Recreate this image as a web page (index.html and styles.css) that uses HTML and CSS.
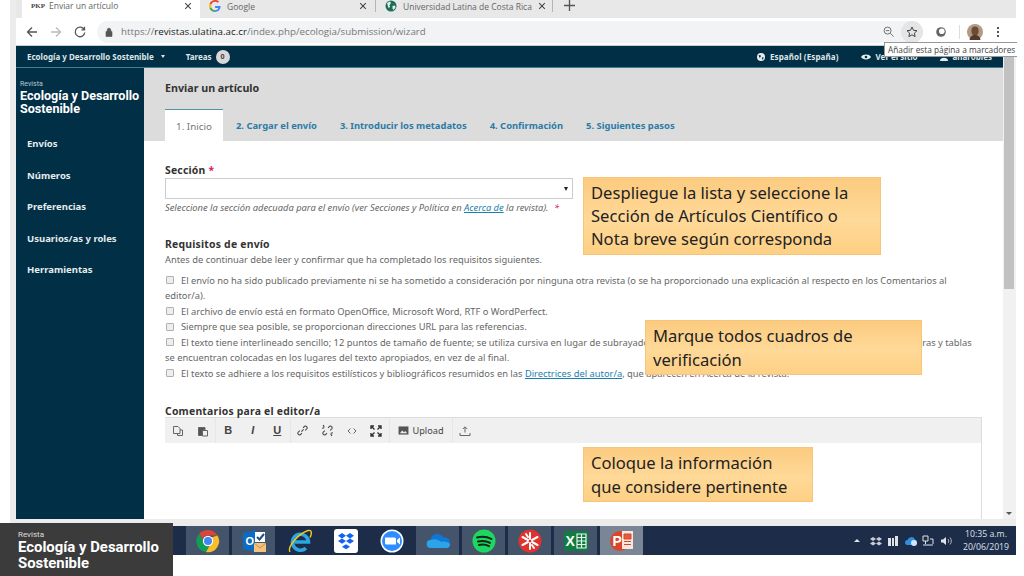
FILE: index.html
```html
<!DOCTYPE html>
<html lang="es">
<head>
    <meta charset="UTF-8">
    <title>Enviar un artículo</title>
    <link rel="stylesheet" href="styles.css">
</head>
<body>
<div class="slide">

    <div class="window">
        <div class="tabs">
            <div class="tab tab-active">
                <span class="pkp">PKP</span>
                <span class="tab-title">Enviar un artículo</span>
                <svg class="tab-close" viewBox="0 0 10 10"><path d="M1.500 1.500l7 7M8.500 1.500l-7 7"/></svg>
            </div>
            <div class="tab tab-second">
                <svg class="favicon" viewBox="0 0 12 12">
                    <path d="M11.600 6.100H6.100v2h3.200C9 9.500 7.700 10.200 6.100 10.200V12c2.100 0 5.500-1.400 5.500-5.900z" fill="#4285f4"/>
                    <path d="M2.300 7.200L.6 8.500C1.600 10.600 3.700 12 6.100 12v-1.800c-1.800 0-3.300-1.200-3.800-3z" fill="#34a853"/>
                    <path d="M2.300 4.800L.6 3.500C.2 4.300 0 5.100 0 6s.2 1.700.6 2.500l1.700-1.300C2.100 6.200 2.100 5.800 2.300 4.800z" fill="#fbbc05"/>
                    <path d="M6.100 0C3.700 0 1.600 1.400.6 3.500l1.700 1.300c.5-1.800 2-3 3.800-3 1 0 1.800.3 2.500 1l1.500-1.500C9.100.6 7.700 0 6.100 0z" fill="#ea4335"/>
                </svg>
                <span class="tab-title">Google</span>
                <svg class="tab-close" viewBox="0 0 10 10"><path d="M1.500 1.500l7 7M8.500 1.500l-7 7"/></svg>
            </div>
            <div class="tab tab-third">
                <svg class="favicon" viewBox="0 0 12 12">
                    <circle cx="6" cy="6" r="5.500" fill="#1d6f5c"/>
                    <path d="M2 3l3-1.500 1 1.500-1.500 2L5 7 3.500 8zM7.500 6l2.500-.5.5 2-2 2.500-1-1.500z" fill="#e9efe6"/>
                </svg>
                <span class="tab-title">Universidad Latina de Costa Rica</span>
                <svg class="tab-close" viewBox="0 0 10 10"><path d="M1.500 1.500l7 7M8.500 1.500l-7 7"/></svg>
            </div>
            <svg class="tab-new" viewBox="0 0 10 10"><path d="M5 0v10M0 5h10"/></svg>
        </div>

        <div class="toolbar">
            <svg class="nav-icon" viewBox="0 0 12 12"><path d="M11 6H1.500M6 1.500L1.500 6 6 10.500"/></svg>
            <svg class="nav-icon nav-off" viewBox="0 0 12 12"><path d="M1 6h9.500M6 1.500L10.500 6 6 10.500"/></svg>
            <svg class="nav-icon" viewBox="0 0 12 12"><path d="M10.200 3.500A4.800 4.800 0 1 0 10.800 6.500M10.500 .8v3h-3"/></svg>
            <div class="address">
                <svg class="lock" viewBox="0 0 8 10"><path d="M1 4.500h6V9.500H1zM2.200 4.500V3a1.800 1.800 0 0 1 3.600 0v1.500"/></svg>
                <span class="url">https://<b>revistas.ulatina.ac.cr</b>/index.php/ecologia/submission/wizard</span>
                <svg class="zoom-glass" viewBox="0 0 12 12"><circle cx="5" cy="5" r="3.800"/><path d="M8 8l3.500 3.500M3.200 5h3.600"/></svg>
                <span class="star-button">
                    <svg viewBox="0 0 12 12"><path d="M6 1l1.500 3.300 3.500.4-2.600 2.400.7 3.500L6 8.800l-3.100 1.800.7-3.500L1 4.700l3.500-.4z"/></svg>
                </span>
            </div>
            <svg class="extension" viewBox="0 0 12 12"><circle cx="6" cy="6" r="4.800"/><circle cx="6.800" cy="5.200" r="2.800" fill="#fff"/></svg>
            <span class="tool-sep"></span>
            <svg class="avatar" viewBox="0 0 16 16">
                <circle cx="8" cy="8" r="8" fill="#b19a83"/>
                <ellipse cx="8" cy="7" rx="3.600" ry="4.400" fill="#6b4a36"/>
                <path d="M2.500 16c.5-4 3-5 5.500-5s5 1 5.500 5z" fill="#54392b"/>
            </svg>
            <span class="menu-dots"><i></i><i></i><i></i></span>
        </div>

        <div class="browser-page">
            <div class="page">
                <header class="topnav">
                    <span class="topnav-link">Ecología y Desarrollo Sostenible</span>
                    <span class="caret"></span>
                    <span class="topnav-link tasks">Tareas</span>
                    <span class="badge">0</span>
                    <div class="topnav-right">
                        <svg class="top-icon" viewBox="0 0 10 10"><circle cx="5" cy="5" r="5"/><path d="M2 2.500l3 .5-.5 2L3 6zM6 6l2-1v2L6.500 8.500z" fill="#012f45"/></svg>
                        <span class="topnav-link lang">Español (España)</span>
                        <svg class="top-icon eye" viewBox="0 0 12 8"><path d="M0 4c2-4 10-4 12 0-2 4-10 4-12 0z"/><circle cx="6" cy="4" r="1.600" fill="#012f45"/></svg>
                        <span class="topnav-link site">Ver el sitio</span>
                        <svg class="top-icon user" viewBox="0 0 10 10"><circle cx="5" cy="2.500" r="2.500"/><path d="M0 10c0-3 2-4 5-4s5 1 5 4z"/></svg>
                        <span class="topnav-link">anarobles</span>
                    </div>
                </header>

                <div class="page-body">
                    <nav class="sidebar">
                        <div class="brand">
                            <small>Revista</small>
                            <strong>Ecología y Desarrollo Sostenible</strong>
                        </div>
                        <ul class="side-menu">
                            <li>Envíos</li>
                            <li>Números</li>
                            <li>Preferencias</li>
                            <li>Usuarios/as y roles</li>
                            <li>Herramientas</li>
                        </ul>
                    </nav>

                    <main class="main">
                        <div class="main-head">
                            <h1>Enviar un artículo</h1>
                            <ul class="steps">
                                <li class="step-active">1. Inicio</li>
                                <li>2. Cargar el envío</li>
                                <li>3. Introducir los metadatos</li>
                                <li>4. Confirmación</li>
                                <li>5. Siguientes pasos</li>
                            </ul>
                        </div>

                        <div class="form">
                            <label class="field-label">Sección <span class="req">*</span></label>
                            <div class="select"><span class="select-arrow"></span></div>
                            <p class="hint">Seleccione la sección adecuada para el envío (ver Secciones y Política en <a>Acerca de</a> la revista). <span class="req">*</span></p>

                            <h2>Requisitos de envío</h2>
                            <p class="intro">Antes de continuar debe leer y confirmar que ha completado los requisitos siguientes.</p>
                            <ul class="checks">
                                <li><span class="box"></span>El envío no ha sido publicado previamente ni se ha sometido a consideración por ninguna otra revista (o se ha proporcionado una explicación al respecto en los Comentarios al editor/a).</li>
                                <li><span class="box"></span>El archivo de envío está en formato OpenOffice, Microsoft Word, RTF o WordPerfect.</li>
                                <li><span class="box"></span>Siempre que sea posible, se proporcionan direcciones URL para las referencias.</li>
                                <li><span class="box"></span>El texto tiene interlineado sencillo; 12 puntos de tamaño de fuente; se utiliza cursiva en lugar de subrayado (excepto en las direcciones URL); y todas las ilustraciones, figuras y tablas se encuentran colocadas en los lugares del texto apropiados, en vez de al final.</li>
                                <li><span class="box"></span>El texto se adhiere a los requisitos estilísticos y bibliográficos resumidos en las <a>Directrices del autor/a</a>, que aparecen en Acerca de la revista.</li>
                            </ul>

                            <h2 class="editor-label">Comentarios para el editor/a</h2>
                            <div class="editor">
                                <div class="editor-tools">
                                    <span class="tool"><svg viewBox="0 0 12 12"><path d="M1.500 1.500h4.500l2 2v5H1.500zM8 5h2.500v5.500h-5V8.500"/></svg></span>
                                    <span class="tool"><svg viewBox="0 0 12 12"><path class="solid" d="M1.500 2.500h6.500v2.500H5.500v5.500h-4z"/><path d="M5.500 5.500h5v5.500h-5z"/></svg></span>
                                    <span class="tool-gap"></span>
                                    <span class="tool tool-text bold">B</span>
                                    <span class="tool tool-text italic">I</span>
                                    <span class="tool tool-text under">U</span>
                                    <span class="tool-gap"></span>
                                    <span class="tool"><svg class="chain" viewBox="0 0 12 12"><path d="M5 7l2-2M6.500 3.500l1.500-1.500a1.700 1.700 0 0 1 2.200 2.200L8.500 5.800M5.500 8.500L4 10a1.700 1.700 0 0 1-2.200-2.200l1.700-1.600"/></svg></span>
                                    <span class="tool"><svg class="chain" viewBox="0 0 12 12"><path d="M6.500 3.500l1.500-1.500a1.700 1.700 0 0 1 2.200 2.200L8.500 5.800M5.500 8.500L4 10a1.700 1.700 0 0 1-2.200-2.200l1.700-1.600M2 1l1 2M1 4l2-.5M10 11l-1-2M11 8l-2 .5"/></svg></span>
                                    <span class="tool"><svg viewBox="0 0 12 12"><path d="M4.500 3.500L2 6l2.500 2.500M7.500 3.500L10 6 7.500 8.500"/></svg></span>
                                    <span class="tool"><svg class="heavy" viewBox="0 0 12 12"><path d="M1 4V1h3M8 1h3v3M11 8v3H8M4 11H1V8M1.500 1.500l3 3M10.500 1.500l-3 3M10.500 10.500l-3-3M1.500 10.500l3-3"/></svg></span>
                                    <span class="tool-gap"></span>
                                    <span class="upload">
                                        <svg viewBox="0 0 12 10"><path class="solid" d="M.5 .5h11v9H.5z"/><path class="hole" d="M2 8l2.500-3 2 2 1.500-1.500L10 8z"/></svg>
                                        Upload
                                    </span>
                                    <span class="tool-gap"></span>
                                    <span class="tool"><svg viewBox="0 0 12 12"><path d="M6 7.500V2M3.800 4L6 1.800 8.200 4M1 8v2.500h10V8"/></svg></span>
                                </div>
                            </div>
                        </div>
                    </main>
                </div>
            </div>

            <div class="scrollbar">
                <div class="scroll-thumb"></div>
                <span class="scroll-arrow"></span>
            </div>
        </div>
    </div>

    <div class="taskbar">
        <span class="task-btn task-open">
            <svg viewBox="0 0 24 24">
                <path d="M12 1a11 11 0 0 1 9.500 5.500H12a5.500 5.500 0 0 0-5.200 3.700L3.200 4.700A11 11 0 0 1 12 1z" fill="#db4437"/>
                <path d="M3.200 4.700l4.700 8.100a5.500 5.500 0 0 0 5.500 4.600L10 23A11 11 0 0 1 3.200 4.700z" fill="#0f9d58"/>
                <path d="M21.500 6.500A11 11 0 0 1 10 23l4.800-8.200a5.500 5.500 0 0 0 .3-6.300z" fill="#f7bd2a"/>
                <circle cx="12" cy="12" r="5.200" fill="#fff"/>
                <circle cx="12" cy="12" r="4" fill="#4285f4"/>
            </svg>
        </span>
        <span class="task-btn task-open">
            <svg viewBox="0 0 24 24">
                <path d="M1 4l13-3v22L1 20z" fill="#0a6cc2"/>
                <rect x="13" y="3" width="10" height="10" fill="#fff"/>
                <path d="M15 8l2.500 2.500L22 5" fill="none" stroke="#1b4f8a" stroke-width="2"/>
                <rect x="12" y="14" width="12" height="9" fill="#f3c27d"/>
                <path d="M12 14l6 5 6-5" fill="none" stroke="#c98f47"/>
                <text x="3.500" y="15.500" class="app-letter" font-size="11">O</text>
            </svg>
        </span>
        <span class="task-btn">
            <svg viewBox="0 0 24 24">
                <path d="M6.500 13h14a8 8 0 1 0-2.600 6.200" fill="none" stroke="#2aa7e0" stroke-width="3.600"/>
                <path d="M2 23C-1 18 10 5 20 1.500c4-1 4 3 2 7" fill="none" stroke="#f2c81f" stroke-width="1.400"/>
            </svg>
        </span>
        <span class="task-btn">
            <svg viewBox="0 0 24 24">
                <rect width="24" height="24" rx="3" fill="#fff"/>
                <path d="M8 4l4 2.700-4 2.700-4-2.700zM16 4l4 2.700-4 2.700-4-2.700zM8 9.400l4 2.700-4 2.700-4-2.700zM16 9.400l4 2.700-4 2.700-4-2.700zM12 15.300l4 2.500-4 2.500-4-2.500z" fill="#0f62f3"/>
            </svg>
        </span>
        <span class="task-btn">
            <svg viewBox="0 0 24 24">
                <circle cx="12" cy="12" r="11.500" fill="#fff"/>
                <circle cx="12" cy="12" r="10" fill="#2d8cff"/>
                <path d="M5 8.500h9.500a1.500 1.500 0 0 1 1.500 1.500v5.500H6.500A1.500 1.500 0 0 1 5 14zM17 11l3-2.500v7L17 13z" fill="#fff"/>
            </svg>
        </span>
        <span class="task-btn task-open">
            <svg viewBox="0 0 24 24">
                <path d="M5 19a4 4 0 0 1-.5-8 7 7 0 0 1 13-2.500A5.500 5.500 0 0 1 24 15a4 4 0 0 1-3 4z" fill="#0f78d4"/>
                <path d="M5 19a4 4 0 0 1-.5-8c4-2 9 0 11 2 3-1 7 0 8.500 2a4 4 0 0 1-3 4z" fill="#2da3ea"/>
            </svg>
        </span>
        <span class="task-btn task-open">
            <svg viewBox="0 0 24 24">
                <circle cx="12" cy="12" r="11.500" fill="#1ed760"/>
                <path d="M5 8.500c5-1.500 10-1 14.500 1.500M6 12.500c4-1 8.500-.6 12 1.300M7 16c3.500-.8 7-.4 10 1.100" fill="none" stroke="#10261a" stroke-width="2" stroke-linecap="round"/>
            </svg>
        </span>
        <span class="task-btn task-open">
            <svg viewBox="0 0 24 24">
                <circle cx="12" cy="12" r="11.500" fill="#e1332d"/>
                <path d="M12 4v6M12 14v6M4.500 8l5.500 3M14 13l5.500 3M4.500 16l5.500-3M14 11l5.500-3M8 5l2 3M16 19l-2-3" fill="none" stroke="#fff" stroke-width="2" stroke-linecap="round"/>
            </svg>
        </span>
        <span class="task-btn task-open">
            <svg viewBox="0 0 24 24">
                <rect x="0" y="2" width="24" height="20" rx="2" fill="#107c41"/>
                <path d="M13 5h9v14h-9zM13 8.500h9M13 12h9M13 15.500h9M17.500 5v14" fill="none" stroke="#e8f5ec" stroke-width="1.200"/>
                <text x="1.500" y="17" class="app-letter" font-size="14">X</text>
            </svg>
        </span>
        <span class="task-btn task-active">
            <svg viewBox="0 0 24 24">
                <circle cx="10" cy="12" r="10" fill="#d8472b"/>
                <rect x="12" y="2" width="11" height="18" fill="#f8e6df"/>
                <path d="M14 5h7v5h-7zM14 12.500h7M14 15.500h7" fill="#e0603f" stroke="#d8472b"/>
                <text x="2.500" y="17" class="app-letter" font-size="14">P</text>
            </svg>
        </span>

        <div class="tray">
            <span class="tray-caret"></span>
            <svg viewBox="0 0 12 12"><path d="M3 1.500l3 2-3 2-3-2zM9 1.500l3 2-3 2-3-2zM3 6l3 2-3 2-3-2zM9 6l3 2-3 2-3-2z" transform="translate(0 .5)" fill="#c9ced6"/></svg>
            <svg viewBox="0 0 12 12"><path d="M1 3h3v8H1zM5 3h2v8H5zM8 1h3v10H8z" fill="#dfe3e8"/></svg>
            <svg viewBox="0 0 12 12"><path d="M2.500 10a2.500 2.500 0 0 1 0-5 4 4 0 0 1 7.500-.5A3 3 0 0 1 10 10z" fill="#2f8fe0"/><circle cx="9" cy="8" r="3" fill="#cfe6fa"/></svg>
            <svg viewBox="0 0 12 12"><path d="M1 1h5v5H1zM3.500 6v3M1 10h10M8 4h3v5" fill="none" stroke="#dfe3e8"/></svg>
            <svg viewBox="0 0 12 12"><path d="M1 4.500h2L6 2v8L3 7.500H1z" fill="#dfe3e8"/><path d="M8 4c1 1 1 3 0 4M10 2.500c1.800 2 1.800 5 0 7" fill="none" stroke="#aab2bd"/></svg>
            <div class="clock">10:35 a.m.<br>20/06/2019</div>
        </div>
    </div>

    <div class="tooltip">Añadir esta página a marcadores</div>

    <div class="callout callout-section">Despliegue la lista y seleccione la Sección de Artículos Científico o Nota breve según corresponda</div>
    <div class="callout callout-checks">Marque todos cuadros de verificación</div>
    <div class="callout callout-editor">Coloque la información que considere pertinente</div>

    <div class="journal-label">
        <small>Revista</small>
        <strong>Ecología y Desarrollo Sostenible</strong>
    </div>
</div>
</body>
</html>
```

FILE: styles.css
```css
* {
    box-sizing: border-box;
}

body {
    margin: 0;
    background: #fff;
    font-family: "Noto Sans", sans-serif;
}

.slide {
    position: relative;
    width: 1024px;
    height: 576px;
    overflow: hidden;
    background: #fff;
}

/* browser window */
.window {
    width: 1006px;
    height: 526px;
    margin-left: 10px;
    padding-left: 6px;
    background: #ececec;
}

.tabs {
    display: flex;
    align-items: flex-start;
    height: 18px;
    padding-left: 6px;
    background: #e8e8e8;
    font-family: "Open Sans", sans-serif;
    font-size: 8.5px;
    color: #666;
}

.tab {
    display: flex;
    align-items: center;
    gap: 6px;
    height: 12px;
    padding: 0 8px 0 9px;
    border-right: 1px solid #b5b5b5;
}

.tab-active {
    width: 178px;
    height: 18px;
    padding-bottom: 7px;
    background: #fff;
    border-right: 0;
}

.tab-second { width: 176px; }
.tab-third { width: 177px; padding-right: 6px; }

.pkp {
    font-family: "Liberation Serif", serif;
    font-size: 7px;
    font-weight: bold;
    color: #444;
    width: 12px;
}

.favicon {
    width: 12px;
    height: 12px;
    flex: none;
}

.tab-title {
    flex: 1;
    white-space: nowrap;
}

.tab-close {
    width: 8px;
    height: 8px;
    flex: none;
    fill: none;
    stroke: #444;
    stroke-width: 1.3;
}

.tab-new {
    width: 11px;
    height: 11px;
    margin-left: 11px;
    fill: none;
    stroke: #555;
    stroke-width: 1.2;
}

.toolbar {
    display: flex;
    align-items: center;
    height: 28px;
    padding-left: 10px;
    background: #fff;
    border-bottom: 1px solid #ccc;
}

.nav-icon {
    width: 12px;
    height: 12px;
    margin-right: 12px;
    fill: none;
    stroke: #555;
    stroke-width: 1.3;
}

.nav-off {
    stroke: #bbb;
}

.address {
    display: flex;
    align-items: center;
    width: 826px;
    height: 22px;
    margin-left: -1px;
    padding-left: 8px;
    border-radius: 11px;
    background: #f1f3f4;
}

.lock {
    width: 8px;
    height: 10px;
    fill: #555;
    stroke: #555;
    stroke-width: .6;
}

.url {
    flex: 1;
    margin-left: 8px;
    font-family: "Open Sans", sans-serif;
    font-size: 9.75px;
    color: #777;
    white-space: nowrap;
}

.url b {
    font-weight: normal;
    color: #222;
}

.zoom-glass {
    width: 11px;
    height: 11px;
    margin-right: 7px;
    fill: none;
    stroke: #666;
}

.star-button {
    display: flex;
    align-items: center;
    justify-content: center;
    width: 22px;
    height: 22px;
    border-radius: 50%;
    background: #e3e5e7;
}

.star-button svg {
    width: 12px;
    height: 12px;
    fill: none;
    stroke: #444;
}

.extension {
    width: 12px;
    height: 12px;
    margin-left: 12px;
    fill: #666;
}

.tool-sep {
    width: 1px;
    height: 14px;
    margin-left: 12px;
    background: #ddd;
}

.avatar {
    width: 16px;
    height: 16px;
    margin-left: 7px;
}

.menu-dots {
    display: flex;
    flex-direction: column;
    gap: 2px;
    margin-left: 14px;
}

.menu-dots i {
    width: 2px;
    height: 2px;
    background: #555;
}

.browser-page {
    display: flex;
    height: 473px;
}

.page {
    display: flex;
    flex-direction: column;
    width: 987px;
    background: #fff;
}

/* top navigation */
.topnav {
    display: flex;
    align-items: center;
    flex: none;
    height: 22px;
    padding: 0 11px;
    background: #012f45;
    border-bottom: 1px solid #3c7f98;
    color: #dfe7ea;
    font-size: 8px;
    font-weight: bold;
}

.topnav-link {
    white-space: nowrap;
}

.caret {
    width: 0;
    height: 0;
    margin-left: 7px;
    border-left: 2.5px solid transparent;
    border-right: 2.5px solid transparent;
    border-top: 3px solid #dfe7ea;
}

.tasks {
    margin-left: 21px;
}

.badge {
    display: flex;
    align-items: center;
    justify-content: center;
    width: 14px;
    height: 14px;
    margin-left: 4px;
    border-radius: 50%;
    background: #d8d8d8;
    color: #444;
    font-size: 7px;
}

.topnav-right {
    display: flex;
    align-items: center;
    margin-left: auto;
}

.top-icon {
    width: 8px;
    height: 8px;
    fill: #e6ecee;
}

.lang {
    margin-left: 5px;
    letter-spacing: .12px;
}

.eye {
    width: 10px;
    margin-left: 22px;
}

.site {
    margin-left: 5px;
}

.user {
    margin: 0 5px 0 22px;
}

.page-body {
    display: flex;
    flex: 1;
    min-height: 0;
}

/* sidebar */
.sidebar {
    flex: none;
    width: 128px;
    padding-top: 12px;
    background: #012f45;
    color: #e6ecee;
}

.brand {
    padding-left: 4px;
}

.brand small {
    display: block;
    font-family: Roboto, sans-serif;
    font-size: 7px;
    line-height: 9px;
    color: #b9c7ce;
}

.brand strong {
    display: block;
    font-family: Roboto, sans-serif;
    font-size: 12.6px;
    line-height: 13px;
    color: #fff;
}

.side-menu {
    list-style: none;
    margin: 22px 0 0;
    padding: 0 0 0 11px;
    font-size: 9.5px;
    font-weight: bold;
}

.side-menu li {
    height: 31.6px;
    line-height: 13px;
}

/* main column */
.main {
    flex: 1;
    min-width: 0;
    overflow: hidden;
}

.main-head {
    height: 73px;
    padding: 13px 0 0 21px;
    background: #dcdcdc;
}

.main-head h1 {
    margin: 0;
    font-size: 10.7px;
    line-height: 14px;
    color: #333;
}

.steps {
    display: flex;
    gap: 23px;
    list-style: none;
    margin: 14px 0 0;
    padding: 0;
    font-size: 9.4px;
    font-weight: bold;
    color: #2b7ba6;
}

.steps li {
    height: 32px;
    line-height: 33px;
    white-space: nowrap;
}

.steps .step-active {
    width: 58px;
    margin-right: -10px;
    text-align: center;
    background: #fff;
    border-top: 1px solid #4f93ad;
    color: #777;
    font-size: 9.8px;
    font-weight: normal;
}

.form {
    padding: 22px 0 0 21px;
    font-size: 9.33px;
    line-height: 15.5px;
    color: #666;
}

.field-label {
    display: block;
    font-size: 10.4px;
    font-weight: bold;
    line-height: 14px;
    letter-spacing: .22px;
    color: #333;
}

.req {
    color: #d81b60;
}

.hint .req {
    margin-left: 3px;
}

.select {
    position: relative;
    width: 408px;
    height: 21px;
    margin-top: 1px;
    background: #fff;
    border: 1px solid #ccc;
}

.select-arrow {
    position: absolute;
    right: 4px;
    top: 8px;
    border-left: 2.5px solid transparent;
    border-right: 2.5px solid transparent;
    border-top: 4px solid #222;
}

.hint {
    margin: 1px 0 0;
    font-style: italic;
    line-height: 16px;
}

.form a {
    color: #1c7fae;
    text-decoration: underline;
}

.form h2 {
    margin: 21px 0 0;
    font-size: 10.4px;
    line-height: 14px;
    letter-spacing: .22px;
    color: #333;
}

.intro {
    margin: 1px 0 5px;
}

.checks {
    list-style: none;
    margin: 0;
    padding: 0;
    width: 817px;
}

.box {
    display: inline-block;
    width: 8px;
    height: 8px;
    margin: 0 7px 0 1px;
    vertical-align: -0.5px;
    background: #eee;
    border: 1px solid #b0b0b0;
    border-radius: 1px;
}

.form .editor-label {
    margin-top: 23px;
}

.editor {
    width: 817px;
    height: 110px;
    margin-top: -1px;
    border: 1px solid #ddd;
    border-left: 0;
}

.editor-tools {
    display: flex;
    align-items: center;
    height: 25px;
    padding-left: 1px;
    background: #f0f0f0;
    color: #333;
}

.tool {
    display: flex;
    align-items: center;
    justify-content: center;
    flex: none;
    width: 24.5px;
    height: 25px;
}

.tool svg {
    width: 12px;
    height: 12px;
    fill: none;
    stroke: #666;
}

.tool svg.heavy {
    stroke-width: 1.4;
    stroke: #333;
}

.tool svg.chain {
    width: 13px;
    height: 13px;
    stroke: #444;
}

.solid {
    fill: #555;
}

.tool-text {
    font-size: 11px;
    font-weight: bold;
    font-family: "Liberation Sans", sans-serif;
    color: #444;
}

.italic {
    font-style: italic;
}

.under {
    text-decoration: underline;
}

.tool-gap {
    flex: none;
    width: 0;
    height: 25px;
    border-left: 1px solid #e6e6e6;
}

.upload {
    display: flex;
    align-items: center;
    flex: none;
    gap: 4px;
    height: 25px;
    padding: 0 8px;
    font-size: 9.2px;
    color: #444;
}

.upload svg {
    width: 11px;
    height: 9px;
}

.hole {
    fill: #eee;
}

.scrollbar {
    position: relative;
    flex: none;
    width: 13px;
    padding: 10px 2px 0 1px;
    background: #f1f1f1;
}

.scroll-thumb {
    height: 233px;
    background: #c1c1c1;
}

.scroll-arrow {
    position: absolute;
    left: 3px;
    bottom: 4px;
    border-left: 3px solid transparent;
    border-right: 3px solid transparent;
    border-top: 3px solid #555;
}

/* windows taskbar */
.taskbar {
    display: flex;
    align-items: center;
    gap: 3px;
    width: 1000px;
    height: 29px;
    margin-left: 16px;
    padding-left: 170px;
    background: #1d2c48;
}

.task-btn {
    display: flex;
    align-items: center;
    justify-content: center;
    flex: none;
    width: 43px;
    height: 29px;
}

.task-btn svg {
    width: 24px;
    height: 24px;
}

.task-open {
    background: #44546a;
}

.task-active {
    background: #7a8596;
}

.app-letter {
    font-family: "Liberation Sans", sans-serif;
    font-weight: bold;
    fill: #fff;
}

.tray {
    display: flex;
    align-items: center;
    gap: 5.5px;
    margin-left: auto;
    padding-right: 5px;
    color: #dfe3e8;
}

.tray svg {
    width: 12px;
    height: 12px;
}

.tray-caret {
    margin-right: 4px;
    border-left: 3px solid transparent;
    border-right: 3px solid transparent;
    border-bottom: 3px solid #dfe3e8;
}

.clock {
    width: 50px;
    margin-left: 4px;
    font-family: "Open Sans", sans-serif;
    font-size: 8.7px;
    line-height: 13px;
    text-align: center;
    white-space: nowrap;
}

/* things laid over the screenshot */
.tooltip {
    position: absolute;
    left: 884px;
    top: 42px;
    width: 133px;
    height: 15px;
    padding-left: 3px;
    background: #fff;
    border: 1px solid #999;
    border-right: 0;
    font-family: "Open Sans", sans-serif;
    font-size: 8.3px;
    line-height: 13px;
    color: #444;
    white-space: nowrap;
}

.callout {
    position: absolute;
    padding: 3px 7px;
    background: linear-gradient(180deg, #fbcb80, #ffd998 55%, #fdd084);
    border: 1px solid #f7c579;
    font-size: 16.6px;
    line-height: 24px;
    color: #222;
}

.callout-section {
    left: 583px;
    top: 177px;
    width: 298px;
    height: 78px;
    line-height: 23px;
}

.callout-checks {
    left: 645px;
    top: 320px;
    width: 277px;
    height: 55px;
}

.callout-editor {
    left: 583px;
    top: 447px;
    width: 230px;
    height: 55px;
}

.journal-label {
    position: absolute;
    left: 0;
    top: 523px;
    width: 173px;
    height: 53px;
    padding: 7px 0 0 18px;
    background: #3b3b3b;
    color: #fff;
    font-family: Roboto, sans-serif;
}

.journal-label small {
    display: block;
    font-size: 8px;
    line-height: 9px;
    color: #ddd;
}

.journal-label strong {
    display: block;
    font-size: 14.9px;
    line-height: 16px;
}
```
